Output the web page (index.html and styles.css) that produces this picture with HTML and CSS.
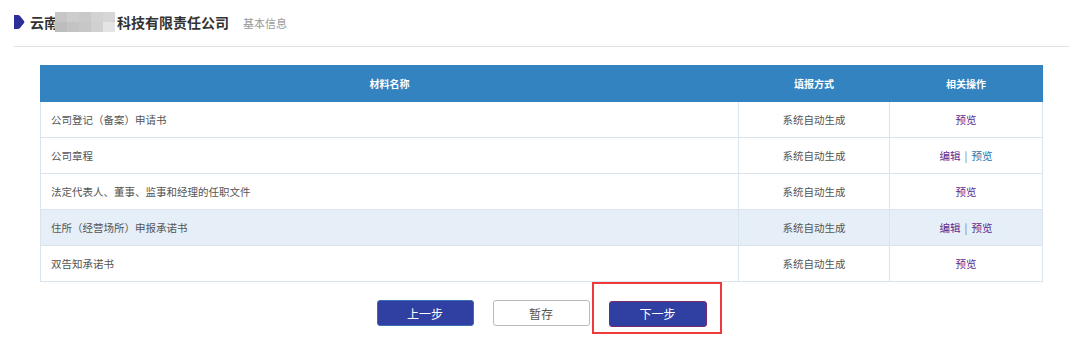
FILE: index.html
```html
<!DOCTYPE html>
<html lang="zh-CN">
<head>
  <meta charset="UTF-8" />
  <title>材料列表</title>
  <link rel="stylesheet" href="styles.css">
</head>
<body>
  <div class="page-title">
    <svg class="title-icon" width="12" height="16" viewBox="0 0 12 16">
      <path d="M1 1 L5 1 Q6 1 7 2 L11 7 Q11.8 8 11 9 L7 14 Q6 15 5 15 L1 15 Z" fill="#2c2f97"/>
    </svg>
    <span class="company">云南<span class="mosaic"><i></i><i></i><i></i><i></i><i></i><i></i><i></i><i></i><i></i><i></i></span>科技有限责任公司</span>
    <span class="sub">基本信息</span>
  </div>

  <div class="content">
    <table class="material-table">
      <thead>
        <tr>
          <th class="col-name">材料名称</th>
          <th class="col-way">填报方式</th>
          <th class="col-op">相关操作</th>
        </tr>
      </thead>
      <tbody>
        <tr>
          <td>公司登记（备案）申请书</td>
          <td class="center">系统自动生成</td>
          <td class="center"><a class="link">预览</a></td>
        </tr>
        <tr>
          <td>公司章程</td>
          <td class="center">系统自动生成</td>
          <td class="center"><a class="link">编辑</a><span class="sep">|</span><a class="link blue">预览</a></td>
        </tr>
        <tr>
          <td>法定代表人、董事、监事和经理的任职文件</td>
          <td class="center">系统自动生成</td>
          <td class="center"><a class="link">预览</a></td>
        </tr>
        <tr class="hover">
          <td>住所（经营场所）申报承诺书</td>
          <td class="center">系统自动生成</td>
          <td class="center"><a class="link">编辑</a><span class="sep">|</span><a class="link">预览</a></td>
        </tr>
        <tr>
          <td>双告知承诺书</td>
          <td class="center">系统自动生成</td>
          <td class="center"><a class="link">预览</a></td>
        </tr>
      </tbody>
    </table>

    <div class="btn-group">
      <button class="btn primary">上一步</button>
      <button class="btn plain">暂存</button>
      <div class="marked">
        <button class="btn primary next">下一步</button>
        <span class="mark-box"></span>
      </div>
    </div>
  </div>
</body>
</html>
```

FILE: styles.css
```css
body {
  margin: 0;
  background: #fff;
  font-family: "Noto Sans CJK SC", "Liberation Sans", sans-serif;
  color: #555;
  min-height: 352px;
}

.page-title {
  display: flex;
  align-items: center;
  height: 46px;
  margin: 0 11px 0 14px;
  border-bottom: 1px solid #e2e2e2;
}

.title-icon {
  margin-top: -2px;
  margin-left: -1px;
}

.company {
  display: flex;
  align-items: center;
  margin-left: 5px;
  font-size: 14px;
  font-weight: bold;
  color: #333;
  margin-top: -2px;
}

.mosaic {
  display: grid;
  grid-template-columns: repeat(5, 12px);
  grid-template-rows: repeat(2, 10px);
  margin: 0 2px 0 -3px;
}

.mosaic i:nth-child(1) { background: #c6c6c6; }
.mosaic i:nth-child(2) { background: #cdcdcd; }
.mosaic i:nth-child(3) { background: #c9c9c9; }
.mosaic i:nth-child(4) { background: #d2d2d2; }
.mosaic i:nth-child(5) { background: #d6d6d6; }
.mosaic i:nth-child(6) { background: #bdbdbd; }
.mosaic i:nth-child(7) { background: #c3c3c3; }
.mosaic i:nth-child(8) { background: #c7c7c7; }
.mosaic i:nth-child(9) { background: #d0d0d0; }
.mosaic i:nth-child(10) { background: #e4e4e4; }

.sub {
  margin-left: 14px;
  font-size: 11px;
  color: #999;
  margin-top: -1px;
}

.content {
  width: 1003px;
  margin: 18px 0 0 40px;
  padding-bottom: 20px;
}

.material-table {
  width: 100%;
  border-collapse: collapse;
  table-layout: fixed;
  font-size: 10.5px;
}

.material-table th {
  height: 35px;
  padding: 0;
  background: #3383c0;
  color: #fff;
  font-weight: bold;
  font-size: 10px;
  border: 1px solid #3383c0;
}

.col-way { width: 150px; }
.col-op { width: 152px; }

.material-table td {
  height: 35px;
  padding: 0 10px;
  border: 1px solid #d9e4ee;
  color: #555;
}

.material-table td.center {
  text-align: center;
  padding: 0;
}

.material-table tr.hover td {
  background: #e6eff7;
}

.link {
  color: #5e2a8e;
  cursor: pointer;
}

.link.blue {
  color: #1d74ad;
}

.sep {
  margin: 0 4px;
  color: #777;
}

.btn-group {
  display: flex;
  justify-content: center;
  align-items: flex-start;
  gap: 19px;
  margin-top: 18px;
}

.btn {
  width: 97px;
  height: 26px;
  border-radius: 3px;
  font-family: inherit;
  font-size: 12px;
  cursor: pointer;
  padding: 0;
}

.btn.primary {
  background: #3040a2;
  border: 1px solid #3a6db3;
  color: #fff;
}

.btn.primary.next {
  border-color: #7a2a6a;
  width: 98px;
}

.btn.plain {
  background: #fff;
  border: 1px solid #b4bcc2;
  color: #555;
}

.marked {
  position: relative;
  height: 26px;
}

.mark-box {
  position: absolute;
  left: -17px;
  top: -18px;
  width: 130px;
  height: 52px;
  box-sizing: border-box;
  border: 2px solid #f0393b;
}
```
